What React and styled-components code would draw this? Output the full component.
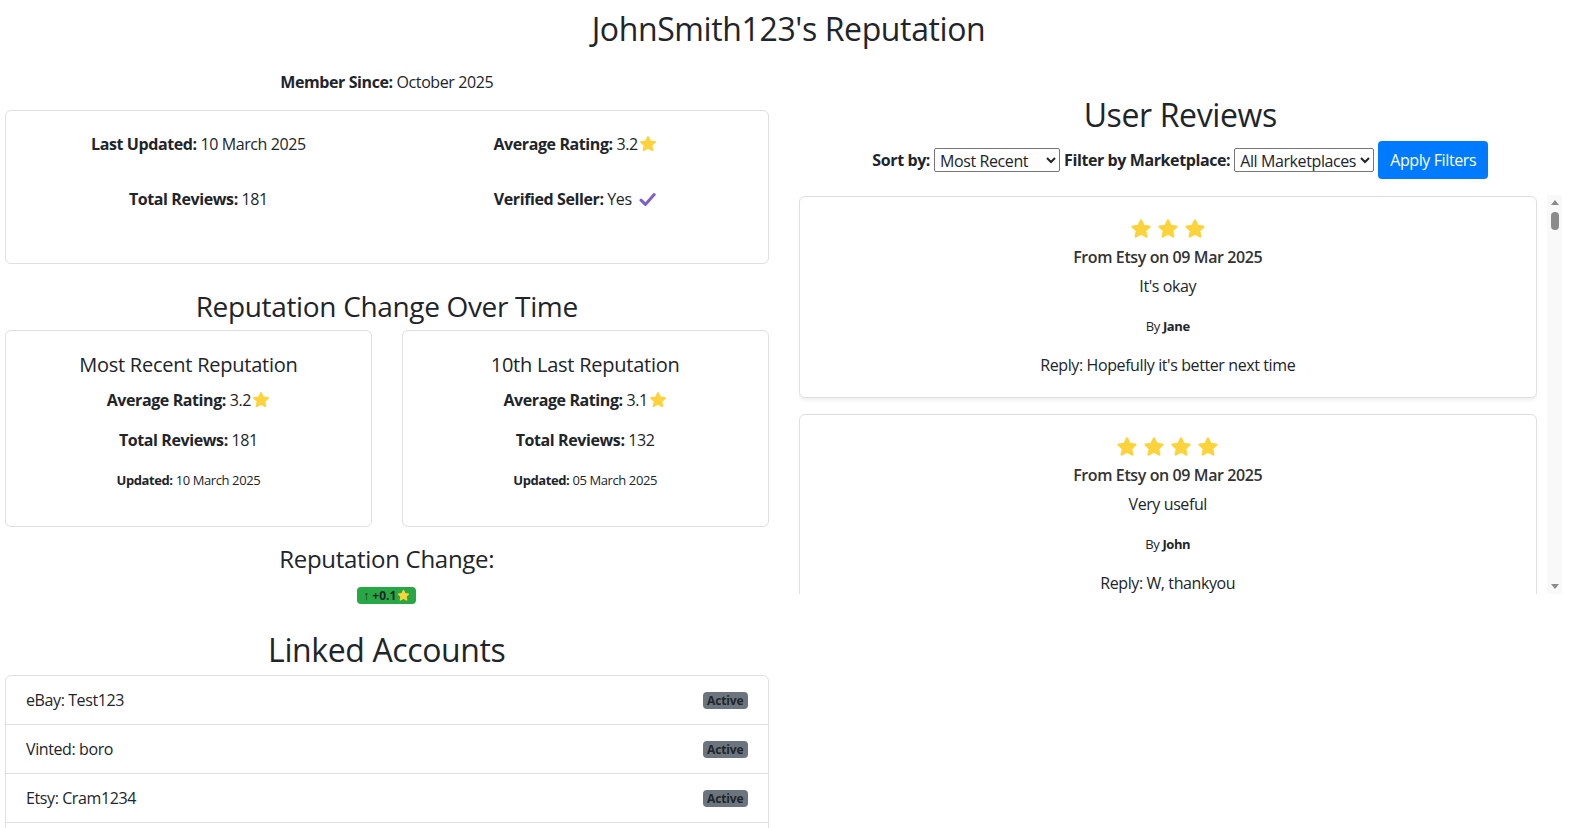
import React from 'react'
import styled, { createGlobalStyle } from 'styled-components'


const reviews = [
    { stars: 3, market: 'Etsy', date: '09 Mar 2025', text: "It's okay", by: 'Jane', reply: "Hopefully it's better next time" },
    { stars: 4, market: 'Etsy', date: '09 Mar 2025', text: 'Very useful', by: 'John', reply: 'W, thankyou' },
    { stars: 5, market: 'eBay', date: '08 Mar 2025', text: 'Fast shipping, great seller', by: 'Mark', reply: 'Thanks Mark!' },
    { stars: 2, market: 'Vinted', date: '07 Mar 2025', text: 'Item arrived late', by: 'Sophie', reply: 'Sorry about the delay' },
    { stars: 4, market: 'eBay', date: '06 Mar 2025', text: 'As described', by: 'Liam', reply: 'Cheers!' },
    { stars: 3, market: 'Etsy', date: '05 Mar 2025', text: 'Decent quality', by: 'Emma', reply: 'Thank you for the feedback' },
    { stars: 5, market: 'Vinted', date: '04 Mar 2025', text: 'Perfect condition', by: 'Oliver', reply: 'Glad you like it' },
    { stars: 1, market: 'eBay', date: '03 Mar 2025', text: 'Wrong size sent', by: 'Ava', reply: 'Please get in touch' },
]

// repeat so the list scrolls like the real one
const allReviews = Array.from({ length: 40 }, (_, i) => reviews[i % reviews.length])

const accounts = [
    { name: 'eBay: Test123' },
    { name: 'Vinted: boro' },
    { name: 'Etsy: Cram1234' },
    { name: 'Depop: cram_sells' },
]


const Star = ({ size = 16 }) => (
    <StarSvg width={size} height={size} viewBox="0 0 24 24">
        <polygon
            points="12,2.8 14.8,8.7 21.2,9.4 16.4,13.8 17.8,20.2 12,16.9 6.2,20.2 7.6,13.8 2.8,9.4 9.2,8.7"
            fill="#fdd33b"
            stroke="#fdd33b"
            strokeWidth="2.6"
            strokeLinejoin="round"
        />
    </StarSvg>
)

const Check = () => (
    <CheckSvg width="17" height="15" viewBox="0 0 17 15">
        <path d="M2 8.2 L6.4 12.4 L15.2 2.6" fill="none" stroke="#7d5fce" strokeWidth="3" strokeLinecap="round" strokeLinejoin="round" />
    </CheckSvg>
)


const App = () => {

    return (
        <Page>
            <GlobalStyle />
            <Title>JohnSmith123's Reputation</Title>
            <Columns>
                <section>
                    <MemberSince><b>Member Since:</b> October 2025</MemberSince>

                    <SummaryCard>
                        <Stat><b>Last Updated:</b> 10 March 2025</Stat>
                        <Stat><b>Average Rating:</b> 3.2<Star size={18} /></Stat>
                        <Stat><b>Total Reviews:</b> 181</Stat>
                        <Stat><b>Verified Seller:</b> Yes <Check /></Stat>
                    </SummaryCard>

                    <SectionTitle>Reputation Change Over Time</SectionTitle>
                    <SnapshotRow>
                        <SnapshotCard>
                            <h5>Most Recent Reputation</h5>
                            <p><b>Average Rating:</b> 3.2<Star size={18} /></p>
                            <p><b>Total Reviews:</b> 181</p>
                            <small><b>Updated:</b> 10 March 2025</small>
                        </SnapshotCard>
                        <SnapshotCard>
                            <h5>10th Last Reputation</h5>
                            <p><b>Average Rating:</b> 3.1<Star size={18} /></p>
                            <p><b>Total Reviews:</b> 132</p>
                            <small><b>Updated:</b> 05 March 2025</small>
                        </SnapshotCard>
                    </SnapshotRow>

                    <ChangeTitle>Reputation Change:</ChangeTitle>
                    <ChangeLine>
                        <ChangeBadge>↑ +0.1<Star size={13} /></ChangeBadge>
                    </ChangeLine>

                    <ListTitle>Linked Accounts</ListTitle>
                    <AccountList>
                        {
                            accounts.map((acc) => (
                                <AccountItem key={acc.name}>
                                    {acc.name}
                                    <StatusBadge>Active</StatusBadge>
                                </AccountItem>
                            ))
                        }
                    </AccountList>
                </section>

                <section>
                    <ReviewsTitle>User Reviews</ReviewsTitle>
                    <FilterBar>
                        <label htmlFor="sort">Sort by:</label>
                        <Select id="sort" $width="126px" defaultValue="recent">
                            <option value="recent">Most Recent</option>
                            <option value="highest">Highest</option>
                            <option value="lowest">Lowest</option>
                        </Select>
                        <label htmlFor="market">Filter by Marketplace:</label>
                        <Select id="market" $width="auto" defaultValue="all">
                            <option value="all">All Marketplaces</option>
                            <option value="ebay">eBay</option>
                            <option value="etsy">Etsy</option>
                            <option value="vinted">Vinted</option>
                        </Select>
                        <ApplyButton type="button">Apply Filters</ApplyButton>
                    </FilterBar>

                    <ReviewPane>
                        <ReviewScroller>
                            {
                                allReviews.map((r, i) => (
                                    <ReviewCard key={i}>
                                        <Stars>
                                            {Array.from({ length: r.stars }, (_, s) => <Star key={s} size={22} />)}
                                        </Stars>
                                        <ReviewSource>From {r.market} on {r.date}</ReviewSource>
                                        <ReviewText>{r.text}</ReviewText>
                                        <ReviewAuthor>By <b>{r.by}</b></ReviewAuthor>
                                        <ReviewReply>Reply: {r.reply}</ReviewReply>
                                    </ReviewCard>
                                ))
                            }
                        </ReviewScroller>
                        <ScrollRail aria-hidden="true">
                            <RailArrow />
                            <RailThumb />
                            <RailArrow $down />
                        </ScrollRail>
                    </ReviewPane>
                </section>
            </Columns>
        </Page>
    )

}


const GlobalStyle = createGlobalStyle`
    *, *::before, *::after {
        box-sizing: border-box;
    }
    body {
        margin: 0;
        background: #fff;
        color: #212529;
        font-family: "Open Sans", "Noto Sans", Arial, sans-serif;
        font-size: 16px;
        line-height: 1.5;
        letter-spacing: -0.025em;
    }
    b {
        font-weight: 700;
    }
`

const Page = styled.main `
    min-height: 100vh;
`

const Heading = styled.h2 `
    text-align: center;
    font-weight: 500;
    line-height: 1.2;
    letter-spacing: -0.012em;
`

const Title = styled(Heading) `
    margin: 0;
    padding-top: 10px;
    font-size: 32px;
`

const Columns = styled.div `
    display: grid;
    grid-template-columns: 1fr 1fr;
    column-gap: 30px;
    padding: 0 15px 0 5px;
    margin-top: 22px;
    align-items: start;
`

const StarSvg = styled.svg `
    display: inline-block;
    vertical-align: -3px;
    margin-left: 1px;
`

const CheckSvg = styled.svg `
    display: inline-block;
    vertical-align: -2px;
    margin-left: 4px;
`

const MemberSince = styled.p `
    margin: 0 0 16px;
    text-align: center;
`

const Card = styled.div `
    border: 1px solid #dfdfdf;
    border-radius: 6px;
    background: #fff;
`

const SummaryCard = styled(Card) `
    display: grid;
    grid-template-columns: 1fr 1fr;
    row-gap: 31px;
    padding: 21px 4px 52px;
`

const Stat = styled.p `
    margin: 0;
    text-align: center;
`

const SectionTitle = styled(Heading).attrs({ as: 'h3' }) `
    margin: 26px 0 6px;
    font-size: 28px;
`

const SnapshotRow = styled.div `
    display: grid;
    grid-template-columns: 1fr 1fr;
    column-gap: 30px;
`

const SnapshotCard = styled(Card) `
    padding: 22px 16px 20px;
    text-align: center;

    h5 {
        margin: 0 0 11px;
        font-size: 20px;
        font-weight: 500;
        line-height: 1.2;
        letter-spacing: -0.012em;
    }

    p {
        margin: 0 0 16px;
    }

    small {
        display: block;
        font-size: 13px;
        line-height: 24px;
        margin-bottom: 14px;
    }
`

const ChangeTitle = styled(Heading).attrs({ as: 'h4' }) `
    margin: 18px 0 8px;
    font-size: 24px;
`

const ChangeLine = styled.p `
    margin: 0;
    text-align: center;
    line-height: 24px;
`

const ChangeBadge = styled.span `
    display: inline-block;
    padding: 2px 6px;
    border-radius: 4px;
    background: #28a745;
    color: #212529;
    font-size: 12px;
    font-weight: 700;
    line-height: 13px;
    letter-spacing: 0;

    svg {
        vertical-align: -2px;
    }
`

const ListTitle = styled(Heading) `
    margin: 25px 0 6px;
    font-size: 32px;
`

const AccountList = styled.ul `
    margin: 0;
    padding: 0;
    list-style: none;
    border: 1px solid #dfdfdf;
    border-radius: 6px;
`

const AccountItem = styled.li `
    display: flex;
    align-items: center;
    justify-content: space-between;
    padding: 12px 20px;
    line-height: 24px;

    & + & {
        border-top: 1px solid #dfdfdf;
    }
`

const StatusBadge = styled.span `
    padding: 3px 4px;
    border-radius: 4px;
    background: #6c757d;
    color: #212529;
    font-size: 12px;
    font-weight: 700;
    line-height: 11px;
    letter-spacing: -0.01em;
`

const ReviewsTitle = styled(Heading) `
    margin: 26px 0 6px;
    font-size: 32px;
`

const FilterBar = styled.div `
    display: flex;
    align-items: center;
    justify-content: center;
    gap: 4px;

    label {
        font-weight: 700;
    }
`

const Select = styled.select `
    width: ${(p) => p.$width};
    height: 24px;
    padding: 0 1px;
    border: 1px solid #767676;
    border-radius: 2px;
    background: #fff;
    color: #212529;
    font-family: inherit;
    font-size: 16px;
    letter-spacing: -0.025em;
`

const ApplyButton = styled.button `
    height: 38px;
    padding: 6px 12px;
    border: none;
    border-radius: 4px;
    background: #007bff;
    color: #fff;
    font-family: inherit;
    font-size: 16px;
    line-height: 24px;
    letter-spacing: -0.025em;
    cursor: pointer;
`

const ReviewPane = styled.div `
    display: flex;
    gap: 10px;
    height: 399px;
    margin-top: 16px;
`

const ReviewScroller = styled.div `
    flex: 1;
    min-width: 0;
    overflow-y: auto;
    scrollbar-width: none;

    &::-webkit-scrollbar {
        display: none;
    }
`

const ScrollRail = styled.div `
    width: 15px;
    display: flex;
    flex-direction: column;
    align-items: center;
    background: #f9f9f9;
`

const RailArrow = styled.div `
    width: 15px;
    height: 15px;
    display: flex;
    align-items: center;
    justify-content: center;
    margin-top: ${(p) => p.$down ? 'auto' : '0'};

    &::before {
        content: "";
        width: 0;
        height: 0;
        border-left: 4.5px solid transparent;
        border-right: 4.5px solid transparent;
        border-${(p) => p.$down ? 'top' : 'bottom'}: 5px solid #8b8b8b;
    }
`

const RailThumb = styled.div `
    width: 8px;
    height: 18px;
    margin-top: 2px;
    border-radius: 4px;
    background: #8b8b8b;
`

const ReviewCard = styled(Card) `
    margin: 1px 0 16px;
    padding: 20px 16px;
    text-align: center;
    box-shadow: 0 2px 4px rgba(0, 0, 0, 0.075);
`

const Stars = styled.div `
    display: flex;
    justify-content: center;
    gap: 5px;
    height: 24px;
    align-items: center;
    margin-bottom: 4px;

    svg {
        margin: 0;
    }
`

const ReviewSource = styled.h6 `
    margin: 0 0 5px;
    font-size: 16px;
    font-weight: 600;
    line-height: 24px;
    color: #333;
`

const ReviewText = styled.p `
    margin: 0 0 18px;
`

const ReviewAuthor = styled.p `
    margin: 0 0 17px;
    font-size: 13px;
    line-height: 20px;
`

const ReviewReply = styled.p `
    margin: 0;
`


export default App
